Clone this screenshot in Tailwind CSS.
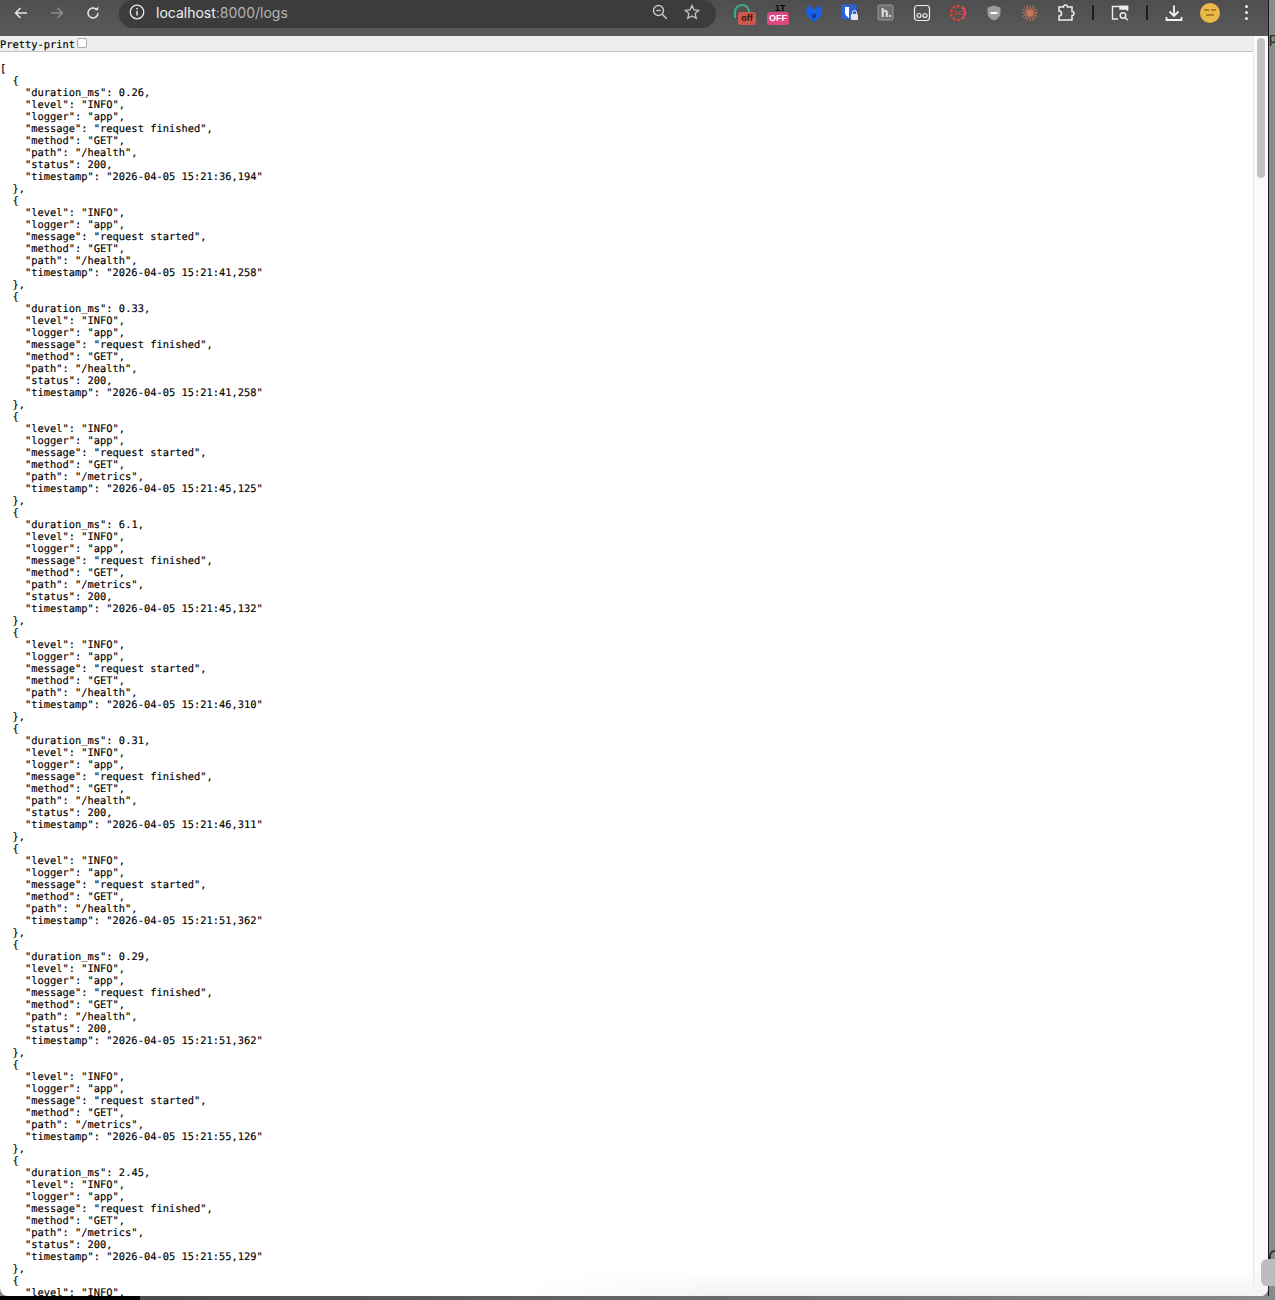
<!DOCTYPE html>
<html>
<head>
<meta charset="utf-8">
<title>localhost:8000/logs</title>
<script src="https://cdn.jsdelivr.net/npm/@tailwindcss/browser@4"></script>
</head>
<body class="bg-[#8a8a8a] h-[1300px] w-[1275px] overflow-hidden relative">
<div class="flex h-[1296px]">
  <div class="w-[1268px] h-[1296px] bg-white rounded-b-[8px] overflow-hidden flex flex-col">
    <!-- browser toolbar -->
    <header class="h-[36px] bg-gradient-to-b from-[#4e4e4e] to-[#5a5a5a] flex items-start shrink-0">
      <div class="w-[119px] h-[25px] flex items-center pl-[13px] gap-[20px]">
        <svg class="w-[16px] h-[16px]" viewBox="0 0 16 16" fill="none" stroke="#e8e8e8" stroke-width="1.5"><path d="M14 8H2.500M7.500 3 2.500 8l5 5"/></svg>
        <svg class="w-[16px] h-[16px]" viewBox="0 0 16 16" fill="none" stroke="#8f8f8f" stroke-width="1.5"><path d="M2 8h11.500M8.500 3l5 5-5 5"/></svg>
        <svg class="w-[16px] h-[16px]" viewBox="0 0 16 16" fill="none" stroke="#e8e8e8" stroke-width="1.5"><path d="M13 8a5 5 0 1 1-1.600-3.700"/><path d="M13.200 1.600v3.600H9.600" fill="#e8e8e8" stroke="none"/></svg>
      </div>
      <div class="w-[597px] h-[28px] bg-[#3c3c3c] rounded-[15px] flex items-center pl-[9px] pr-[16px] pb-[4px]">
        <svg class="w-[18px] h-[18px]" viewBox="0 0 18 18" fill="none" stroke="#e8e8e8" stroke-width="1.300"><circle cx="9" cy="9" r="6.800"/><path d="M9 8v4.600" stroke-width="1.500"/><circle cx="9" cy="5.700" r=".9" fill="#e8e8e8" stroke="none"/></svg>
        <span class="ml-[10px] text-[14px] font-['Inter','Liberation_Sans',sans-serif] text-[#f0f0f0]">localhost<span class="text-[#b4b4b4]">:8000/logs</span></span>
        <svg class="ml-auto w-[16px] h-[16px]" viewBox="0 0 16 16" fill="none" stroke="#c8c8c8" stroke-width="1.400"><circle cx="6.500" cy="6.500" r="5"/><path d="M4.300 6.500h4.400M10.200 10.200l4.600 4.600"/></svg>
        <svg class="ml-[16px] w-[16px] h-[16px]" viewBox="0 0 16 16" fill="none" stroke="#c8c8c8" stroke-width="1.300"><path d="m8 1.500 2 4.400 4.700.5-3.500 3.200 1 4.700L8 11.900l-4.200 2.400 1-4.700L1.300 6.400 6 5.900z"/></svg>
      </div>
      <div class="flex-1 h-[25px] flex items-center pl-[17px] gap-[12px]">
        <!-- extension icons, with badges over them -->
        <div class="relative w-[24px] h-[24px]">
          <svg class="w-[18px] h-[18px] mt-[2px]" viewBox="0 0 18 18" fill="none" stroke="#3fa98f" stroke-width="2"><path d="M2 15V9a7 7 0 0 1 14 0"/></svg>
          <span class="absolute left-[5px] top-[11px] w-[18px] h-[13px] rounded-[3px] bg-[#cc5a4c] text-[#2b1512] text-[9px] leading-[13px] text-center font-bold font-['Liberation_Sans',sans-serif]">off</span>
        </div>
        <div class="relative w-[24px] h-[24px]">
          <span class="absolute left-[6px] top-[2px] text-[9px] leading-[10px] font-bold text-black font-['Liberation_Sans',sans-serif]">1T</span>
          <span class="absolute -left-[2px] top-[11px] w-[22px] h-[13px] rounded-[3px] bg-[#e0467f] text-white text-[9px] leading-[13px] text-center font-bold font-['Liberation_Sans',sans-serif]">OFF</span>
        </div>
        <svg class="w-[18px] h-[18px]" viewBox="0 0 18 18"><path d="M4 1C1 4 0 9 3 13c2 2 4 3 6 5 2-2 4-3 6-5 3-4 2-9-1-12L9 6z" fill="#1a5fe8"/><path d="M9 11 6.500 8.500 7 13l2 2 2-2 .5-4.500z" fill="#123a9a"/></svg>
        <svg class="w-[18px] h-[18px] ml-[6px]" viewBox="0 0 18 18"><rect x=".5" y=".5" width="15" height="15" fill="#2a62d8"/><path d="M4 3h8v6c0 2-2 3.500-4 5-2-1.500-4-3-4-5z" fill="#fff"/><path d="M8 3h4v6c0 2-2 3.500-4 5z" fill="#2a62d8"/><rect x="10" y="10" width="7" height="6" rx="1" fill="#e8e8e8"/><path d="M11.500 10V8.500a2 2 0 0 1 4 0V10" fill="none" stroke="#e8e8e8"/></svg>
        <svg class="w-[18px] h-[18px] ml-[6px]" viewBox="0 0 18 18"><rect x="1" y="1" width="15" height="15" rx="1.500" fill="#707070" stroke="#9a9a9a"/><text x="4" y="13" font-family="Liberation Sans" font-weight="700" font-size="12" fill="#e8e8e8">h.</text></svg>
        <svg class="w-[18px] h-[18px] ml-[6px]" viewBox="0 0 18 18" fill="none" stroke="#eee" stroke-width="1.200"><rect x="1.500" y="1.500" width="15" height="15" rx="3"/><circle cx="6" cy="11.500" r="2"/><circle cx="12" cy="11.500" r="2"/></svg>
        <svg class="w-[18px] h-[18px] ml-[6px]" viewBox="0 0 18 18" fill="none"><circle cx="9" cy="9" r="7" stroke="#dd4433" stroke-width="2.500" stroke-dasharray="3 1.500"/><path d="M14 4a7 7 0 0 1 0 10" stroke="#e0467f" stroke-width="2.500" stroke-dasharray="3 1.500"/><text x="5" y="11" font-family="Liberation Sans" font-weight="700" font-size="6" fill="#dd4433" stroke="none">SC</text></svg>
        <svg class="w-[18px] h-[18px] ml-[6px]" viewBox="0 0 18 18"><path d="M9 1.500 15.500 3.500V9c0 3.500-3 6-6.500 7.500C5.500 15 2.500 12.500 2.500 9V3.500z" fill="#9c9c9c"/><rect x="5.500" y="8" width="7" height="2" fill="#fff"/></svg>
        <svg class="w-[18px] h-[18px] ml-[6px]" viewBox="0 0 18 18" stroke="#c9785a" stroke-width="1"><path d="M9 1v16M1 9h16M3.300 3.300l11.400 11.400M14.700 3.300 3.300 14.700M5.500 1.500l7 15M12.500 1.500l-7 15M1.500 5.500l15 7M16.500 5.500l-15 7"/><circle cx="9" cy="9" r="3" fill="#c9785a" stroke="none"/></svg>
        <svg class="w-[18px] h-[18px] ml-[6px]" viewBox="0 0 18 18" fill="none" stroke="#eee" stroke-width="1.500"><path d="M2 3h4.500a2 2 0 0 1 4 0H15v4.500a2 2 0 0 1 0 4V16H2v-4a2.500 2.500 0 0 0 0-5z"/></svg>
        <span class="w-[2px] h-[15px] bg-[#1e1e1e] ml-[5px]"></span>
        <svg class="w-[18px] h-[18px] ml-[5px]" viewBox="0 0 18 18" fill="none" stroke="#eee" stroke-width="1.400"><path d="M7 15H1.500V2.500h15V7"/><path d="M9 2.500h7.500v2.500H9z" fill="#eee"/><circle cx="12" cy="11.500" r="2.800"/><path d="m14 13.500 2.800 2.800"/></svg>
        <span class="w-[2px] h-[15px] bg-[#1e1e1e] ml-[5px]"></span>
        <svg class="w-[18px] h-[18px] ml-[5px]" viewBox="0 0 18 18" fill="none" stroke="#f2f2f2" stroke-width="1.800"><path d="M9 1.500v10M4.500 7.500 9 12l4.500-4.500M1.500 13v3h15v-3"/></svg>
        <div class="w-[20px] h-[20px] ml-[5px] rounded-full bg-[#ecb949] flex flex-col items-center justify-center gap-[3px]">
          <div class="flex gap-[2px]">
            <span class="w-[5px] h-[2px] bg-[#a8802a]"></span>
            <span class="w-[5px] h-[2px] bg-[#a8802a]"></span>
          </div>
          <span class="w-[8px] h-[2px] bg-[#a8802a]"></span>
        </div>
        <div class="ml-[13px] flex flex-col gap-[3px]">
          <span class="w-[3px] h-[3px] rounded-full bg-[#eee]"></span>
          <span class="w-[3px] h-[3px] rounded-full bg-[#eee]"></span>
          <span class="w-[3px] h-[3px] rounded-full bg-[#eee]"></span>
        </div>
      </div>
    </header>
    <div class="flex flex-1 min-h-0 relative">
      <main class="flex-1 min-w-0 overflow-hidden font-['DejaVu_Sans_Mono','Liberation_Mono',monospace] text-[10.4px] leading-[12px] text-black [text-rendering:geometricPrecision] [-webkit-text-stroke:0.15px_black]">
        <div class="h-[16px] bg-[#efefef] border-b border-[#c2c2c2] flex items-center pt-[3px]">
          <span>Pretty-print</span>
          <span class="ml-[2px] -mt-[4px] w-[10px] h-[10px] bg-white border border-[#a8a8a8] rounded-[2px]"></span>
        </div>
        <pre class="mt-[11px] font-['DejaVu_Sans_Mono','Liberation_Mono',monospace] text-[10.4px] leading-[12px]">[
  {
    "duration<span class="relative -top-[1px]">_</span>ms": 0.26,
    "level": "INFO",
    "logger": "app",
    "message": "request finished",
    "method": "GET",
    "path": "/health",
    "status": 200,
    "timestamp": "2026-04-05 15:21:36,194"
  },
  {
    "level": "INFO",
    "logger": "app",
    "message": "request started",
    "method": "GET",
    "path": "/health",
    "timestamp": "2026-04-05 15:21:41,258"
  },
  {
    "duration<span class="relative -top-[1px]">_</span>ms": 0.33,
    "level": "INFO",
    "logger": "app",
    "message": "request finished",
    "method": "GET",
    "path": "/health",
    "status": 200,
    "timestamp": "2026-04-05 15:21:41,258"
  },
  {
    "level": "INFO",
    "logger": "app",
    "message": "request started",
    "method": "GET",
    "path": "/metrics",
    "timestamp": "2026-04-05 15:21:45,125"
  },
  {
    "duration<span class="relative -top-[1px]">_</span>ms": 6.1,
    "level": "INFO",
    "logger": "app",
    "message": "request finished",
    "method": "GET",
    "path": "/metrics",
    "status": 200,
    "timestamp": "2026-04-05 15:21:45,132"
  },
  {
    "level": "INFO",
    "logger": "app",
    "message": "request started",
    "method": "GET",
    "path": "/health",
    "timestamp": "2026-04-05 15:21:46,310"
  },
  {
    "duration<span class="relative -top-[1px]">_</span>ms": 0.31,
    "level": "INFO",
    "logger": "app",
    "message": "request finished",
    "method": "GET",
    "path": "/health",
    "status": 200,
    "timestamp": "2026-04-05 15:21:46,311"
  },
  {
    "level": "INFO",
    "logger": "app",
    "message": "request started",
    "method": "GET",
    "path": "/health",
    "timestamp": "2026-04-05 15:21:51,362"
  },
  {
    "duration<span class="relative -top-[1px]">_</span>ms": 0.29,
    "level": "INFO",
    "logger": "app",
    "message": "request finished",
    "method": "GET",
    "path": "/health",
    "status": 200,
    "timestamp": "2026-04-05 15:21:51,362"
  },
  {
    "level": "INFO",
    "logger": "app",
    "message": "request started",
    "method": "GET",
    "path": "/metrics",
    "timestamp": "2026-04-05 15:21:55,126"
  },
  {
    "duration<span class="relative -top-[1px]">_</span>ms": 2.45,
    "level": "INFO",
    "logger": "app",
    "message": "request finished",
    "method": "GET",
    "path": "/metrics",
    "status": 200,
    "timestamp": "2026-04-05 15:21:55,129"
  },
  {
    "level": "INFO",</pre>
      </main>
      <!-- scrollbar -->
      <aside class="w-[15px] shrink-0 bg-[#fafafa] border-l border-[#e6e6e6] pt-[2px] pl-[3px]">
        <div class="w-[8px] h-[140px] rounded-[4px] bg-[#c2c2c2]"></div>
      </aside>
      <div class="absolute right-0 bottom-0 w-[750px] h-[26px] bg-gradient-to-b from-white/0 to-[#f3f3f3] [mask-image:linear-gradient(to_right,transparent,black_200px)]"></div>
    </div>
  </div>
  <div class="w-[1px] bg-[#1a1a1a]"></div>
  <div class="flex-1 relative overflow-hidden">
    <span class="absolute left-0 top-[31px] text-[14px] leading-[14px] font-['Liberation_Sans',sans-serif] text-[#222]">p</span>
  </div>
</div>
<div class="h-[4px] flex">
  <div class="w-[140px] bg-black"></div>
  <div class="flex-1 bg-gradient-to-r from-[#4a4a4a] to-[#8a8a8a]"></div>
</div>
<!-- window behind, peeking out at the lower right -->
<div class="absolute left-[1269px] top-[1250px] w-[10px] h-[14px] rounded-tl-[6px] border-l-2 border-t-2 border-[#333]"></div>
<div class="absolute left-[1261px] top-[1259px] w-[14px] h-[27px] rounded-l-[6px] bg-[#bdbdbd]"></div>
</body>
</html>
